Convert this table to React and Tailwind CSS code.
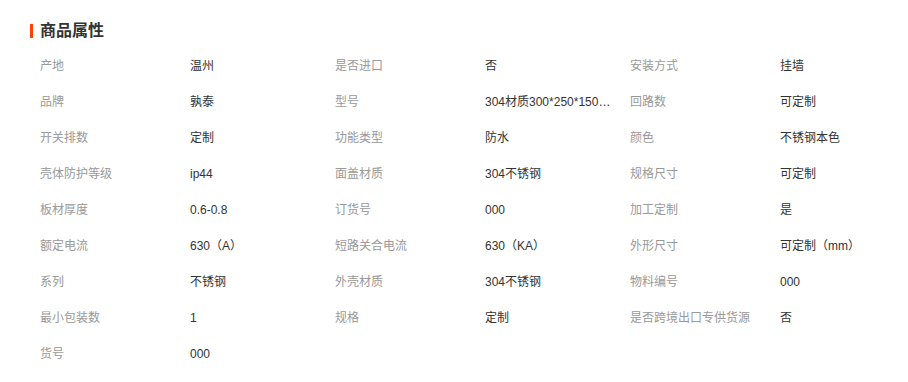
import React from "react";

const rows = [
  [["产地", "温州"], ["是否进口", "否"], ["安装方式", "挂墙"]],
  [["品牌", "孰泰"], ["型号", "304材质300*250*150*0.8"], ["回路数", "可定制"]],
  [["开关排数", "定制"], ["功能类型", "防水"], ["颜色", "不锈钢本色"]],
  [["壳体防护等级", "ip44"], ["面盖材质", "304不锈钢"], ["规格尺寸", "可定制"]],
  [["板材厚度", "0.6-0.8"], ["订货号", "000"], ["加工定制", "是"]],
  [["额定电流", "630（A）"], ["短路关合电流", "630（KA）"], ["外形尺寸", "可定制（mm）"]],
  [["系列", "不锈钢"], ["外壳材质", "304不锈钢"], ["物料编号", "000"]],
  [["最小包装数", "1"], ["规格", "定制"], ["是否跨境出口专供货源", "否"]],
  [["货号", "000"]],
];

export default function App() {
  return (
    <div
      className="w-[908px] h-[382px] bg-white overflow-hidden"
      style={{ fontFamily: '"Liberation Sans", Arial, "Noto Sans CJK SC", sans-serif' }}
    >
      <div className="pt-[20px] pl-[30px] flex items-center h-[42px]">
        <span className="w-[3px] h-[14px] bg-[#ff4400] mr-[7px]" />
        <h3 className="text-[16px] font-bold text-[#333] leading-[22px]">商品属性</h3>
      </div>
      <div className="pt-[6px] pl-[40px]">
        {rows.map((row, i) => (
          <div key={i} className="flex h-[36px] items-center text-[12px]">
            {row.map(([label, value], j) => (
              <div key={j} className="flex w-[295px] shrink-0">
                <span className="w-[150px] shrink-0 text-[#999] whitespace-nowrap">{label}</span>
                <span className="w-[127px] text-[#333] truncate">{value}</span>
              </div>
            ))}
          </div>
        ))}
      </div>
    </div>
  );
}
